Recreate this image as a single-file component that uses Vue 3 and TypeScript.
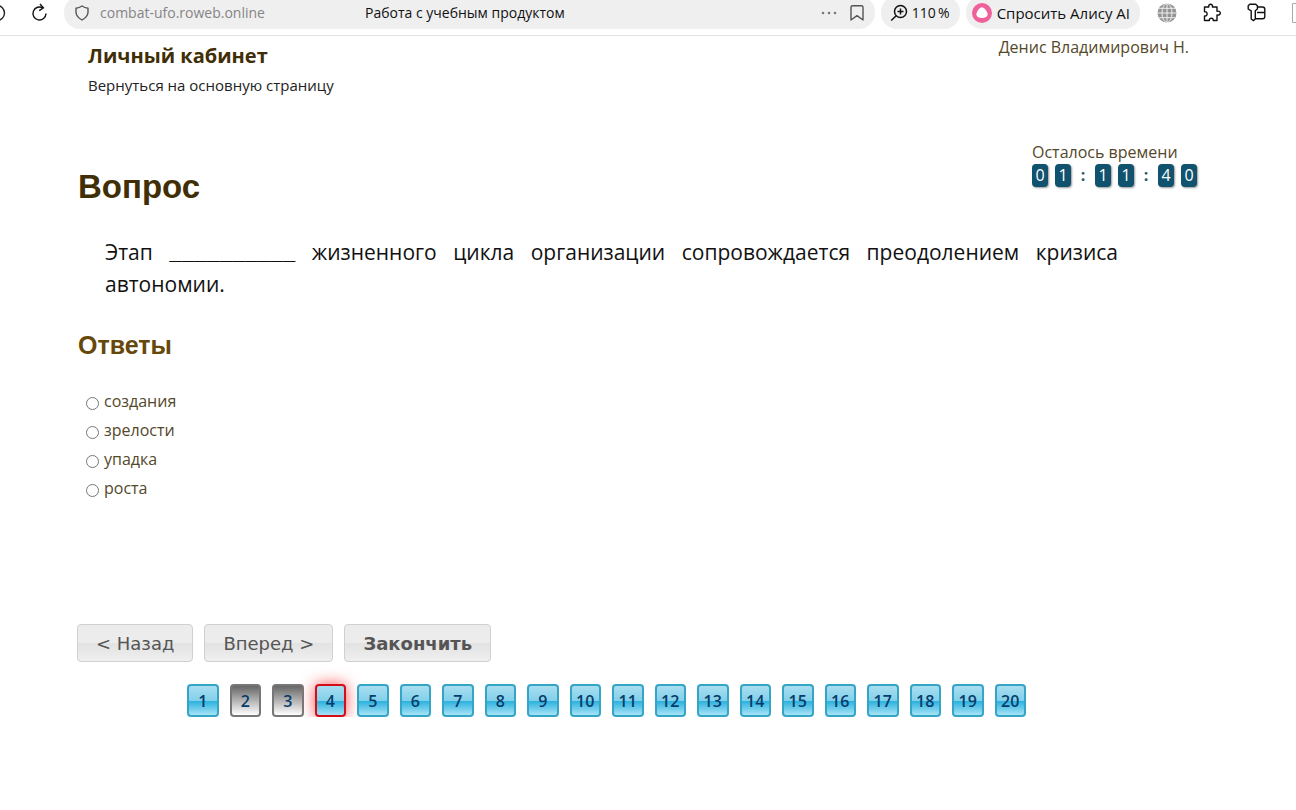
<script setup lang="ts">
import { ref } from 'vue'

type PageState = 'open' | 'answered' | 'current'

interface PageItem {
  number: number
  state: PageState
}

const answers: string[] = ['создания', 'зрелости', 'упадка', 'роста']
const selected = ref<string>('')
const timer: string[] = ['0', '1', ':', '1', '1', ':', '4', '0']

const stateOf = (n: number): PageState => {
  if (n === 4) return 'current'
  return n === 2 || n === 3 ? 'answered' : 'open'
}
const pages: PageItem[] = Array.from({ length: 20 }, (_, i) => ({
  number: i + 1,
  state: stateOf(i + 1),
}))
</script>

<template>
  <div class="window">
    <header class="toolbar">
      <button class="icon-button back" type="button" aria-label="Назад по истории">
        <svg width="6" height="20" viewBox="0 0 6 20" fill="none" stroke="#222" stroke-width="1.4">
          <circle cx="-3" cy="10" r="7.5" />
        </svg>
      </button>
      <button class="icon-button reload" type="button" aria-label="Обновить">
        <svg width="18" height="20" viewBox="0 0 18 20" fill="none" stroke="#111" stroke-width="1.4">
          <path d="M13 5 A6.5 6.5 0 1 0 16 10.6" />
          <path d="M10 1 L13.4 4.9 L9.2 7.6" />
        </svg>
      </button>
      <div class="address">
        <svg class="shield" width="16" height="18" viewBox="0 0 16 18" fill="none" stroke="#555" stroke-width="1.4" stroke-linejoin="round">
          <path d="M8 2 Q10.8 3.9 14 4.2 V8.5 Q13.6 13 8 16 Q2.4 13 2 8.5 V4.2 Q5.2 3.9 8 2Z" />
        </svg>
        <span class="host">combat-ufo.roweb.online</span>
        <span class="title">Работа с учебным продуктом</span>
        <button class="icon-button dots" type="button" aria-label="Ещё">
          <svg width="18" height="18" viewBox="0 0 18 18" fill="#777">
            <circle cx="3" cy="9" r="1.3" /><circle cx="9" cy="9" r="1.3" /><circle cx="15" cy="9" r="1.3" />
          </svg>
        </button>
        <button class="icon-button" type="button" aria-label="Закладка">
          <svg width="16" height="18" viewBox="0 0 16 18" fill="none" stroke="#555" stroke-width="1.4" stroke-linejoin="round">
            <path d="M2 3.2 Q2 1.7 3.5 1.7 H12.5 Q14 1.7 14 3.2 V16 L8 11.6 L2 16Z" />
          </svg>
        </button>
      </div>
      <button class="pill zoom" type="button">
        <svg width="18" height="18" viewBox="0 0 18 18" fill="none" stroke="#111" stroke-width="1.5">
          <circle cx="10.5" cy="7.5" r="6" /><path d="M6.2 11.8 L1.2 16.5 M7.5 7.5 H13.5 M10.5 4.5 V10.5" />
        </svg>
        <span>110&thinsp;%</span>
      </button>
      <button class="pill alice" type="button">
        <svg width="20" height="20" viewBox="0 0 20 20">
          <circle cx="10" cy="10" r="10" fill="#f0609a" />
          <path d="M10 4.2 C12.2 4.2 15.6 8.8 15.6 11.2 C15.6 14 12.5 15 10 15 C7.5 15 4.4 14 4.4 11.2 C4.4 8.8 7.8 4.2 10 4.2Z" fill="#fff" />
        </svg>
        <span>Спросить Алису AI</span>
      </button>
      <div class="extensions">
        <button class="icon-button" type="button" aria-label="Переводчик">
          <svg width="20" height="20" viewBox="0 0 20 20">
            <circle cx="10" cy="10" r="9.5" fill="#949494" />
            <g fill="none" stroke="#eee" stroke-width="1"><path d="M10 0 V20 M0 10 H20 M2 5.3 H18 M2 14.7 H18" /><ellipse cx="10" cy="10" rx="5" ry="9.5" /></g>
          </svg>
        </button>
        <button class="icon-button" type="button" aria-label="Расширения">
          <svg width="20" height="20" viewBox="0 0 20 20" fill="none" stroke="#111" stroke-width="1.4" stroke-linejoin="round">
            <path d="M2.5 4 H6.8 C5.8 .4 11.4 .4 10.4 4 H15 V8.2 C19.4 7.2 19.4 13 15 12 V17.5 H11.2 C11.8 14.4 6.8 14.4 7.4 17.5 H2.5 V13 C6 13.7 6 8 2.5 8.7Z" />
          </svg>
        </button>
        <button class="icon-button" type="button" aria-label="Пароли">
          <svg width="20" height="20" viewBox="0 0 20 20" fill="none" stroke="#111" stroke-width="1.4" stroke-linejoin="round">
            <path d="M2.8 1.2 H8.7 L10.4 2.8 V6 L8.3 7.8 V16 L6.4 17.6 L4.2 16 V7.8 L1.2 6 V2.8Z" />
            <path d="M10.4 4 H15.5 Q17.8 4 17.8 6.2 V13.6 Q17.8 15.8 15.5 15.8 H8.3 M10 9.5 H17.8" />
          </svg>
        </button>
        <svg class="edge" width="4" height="20" viewBox="0 0 4 20" fill="none" stroke="#aaa"><path d="M4 .5 H.5 V19.5 H4" /></svg>
      </div>
    </header>

    <main class="page">
      <div class="top">
        <div class="cabinet">
          <h2>Личный кабинет</h2>
          <a href="#">Вернуться на основную страницу</a>
        </div>
        <div class="user">Денис Владимирович Н.</div>
      </div>

      <div class="question-head">
        <h1>Вопрос</h1>
        <div class="countdown">
          <div class="countdown-label">Осталось времени</div>
          <div class="digits">
            <span v-for="(c, i) in timer" :key="i" :class="c === ':' ? 'colon' : 'digit'">{{ c }}</span>
          </div>
        </div>
      </div>

      <p class="question">
        Этап <span class="blank">__________</span> жизненного цикла организации сопровождается преодолением кризиса автономии.
      </p>

      <h3>Ответы</h3>
      <div class="answers" role="radiogroup" aria-label="Ответы">
        <label v-for="answer in answers" :key="answer">
          <input v-model="selected" type="radio" name="answer" :value="answer" />
          <span>{{ answer }}</span>
        </label>
      </div>

      <div class="actions">
        <button type="button">&lt; Назад</button>
        <button type="button">Вперед &gt;</button>
        <button type="button" class="finish">Закончить</button>
      </div>

      <nav class="pager" aria-label="Вопросы">
        <button v-for="p in pages" :key="p.number" type="button" :class="p.state">{{ p.number }}</button>
      </nav>
    </main>
  </div>
</template>

<style>
body {
  margin: 0;
  background: #fff;
}
</style>

<style scoped>
.window {
  font-family: "Open Sans", "Noto Sans", sans-serif;
  color: #3f2e06;
  overflow: hidden;
}
button {
  font-family: inherit;
  cursor: pointer;
}
svg {
  display: block;
  flex: none;
}
.toolbar {
  display: flex;
  align-items: flex-start;
  height: 35px;
  border-bottom: 1px solid #e2e2e4;
  font-size: 14px;
  color: #111;
}
.icon-button {
  border: 0;
  padding: 0;
  background: none;
}
.back {
  margin: 3px 24px 0 0;
}
.reload {
  margin: 3px 16px 0 0;
}
.address,
.pill {
  display: flex;
  align-items: center;
  box-sizing: border-box;
  height: 33px;
  margin-top: -4px;
  border: 0;
  border-radius: 16px;
  background: #efeff0;
  white-space: nowrap;
}
.address {
  flex: 1;
  padding: 0 10px;
}
.host {
  flex: none;
  width: 265px;
  margin-left: 10px;
  color: #858585;
}
.title {
  flex: 1;
}
.dots {
  margin-right: 11px;
}
.pill {
  margin-left: 6px;
  padding: 0 10px 0 9px;
  gap: 4px;
  font-size: 14px;
  color: #111;
}
.pill.alice {
  padding: 0 10px 0 6px;
  gap: 5px;
  font-size: 15px;
}
.extensions {
  display: flex;
  gap: 25px;
  margin: 3px 0 0 17px;
}
.page {
  padding: 0 78px;
}
.top {
  display: flex;
  justify-content: space-between;
  padding: 0 29px 0 10px;
}
h1,
h2,
h3 {
  margin: 0;
}
h2 {
  margin-top: 4px;
  font-size: 20px;
  line-height: 32px;
}
.cabinet a {
  display: block;
  font-size: 15px;
  line-height: 26px;
  color: #222;
  text-decoration: none;
}
.user {
  font-size: 16px;
  line-height: 22px;
  color: #54482a;
}
.question-head {
  display: flex;
  justify-content: space-between;
  margin-top: 43px;
}
h1 {
  margin-top: 26px;
  font-family: "Liberation Sans", Arial, sans-serif;
  font-size: 33px;
  line-height: 40px;
}
.countdown {
  width: 186px;
}
.countdown-label {
  font-size: 16px;
  line-height: 23px;
  color: #54482a;
}
.digits {
  display: flex;
  gap: 7px;
  align-items: center;
  font-size: 16px;
  line-height: 23px;
  text-align: center;
}
.digit {
  width: 16px;
  border-radius: 4px;
  background: #11526f;
  color: #fff;
  box-shadow: 1px 1px 2px #999;
}
.colon {
  width: 10px;
  font-weight: 700;
  color: #245a62;
}
.question {
  margin: 29px 100px 0 27px;
  font-size: 21px;
  line-height: 32px;
  color: #111;
  text-align: justify;
}
.blank {
  font-family: "Liberation Mono", monospace;
  line-height: 20px;
}
h3 {
  margin-top: 29px;
  font-family: "Liberation Sans", Arial, sans-serif;
  font-size: 25px;
  line-height: 32px;
  color: #66490a;
}
.answers {
  display: flex;
  flex-direction: column;
  align-items: flex-start;
  margin: 26px 0 0 8px;
}
.answers label {
  display: flex;
  align-items: center;
  gap: 5px;
  font-size: 16px;
  line-height: 29px;
  color: #54482a;
}
.answers input {
  width: 13px;
  height: 13px;
  margin: 4px 0 0;
}
.actions {
  display: flex;
  gap: 11px;
  margin: 121px 0 0 -1px;
}
.actions button {
  box-sizing: border-box;
  height: 38px;
  padding: 0 18px;
  border: 1px solid #d0d0d0;
  border-radius: 4px;
  background: linear-gradient(#ececec 50%, #e2e2e2 50%, #efefef);
  font-family: "DejaVu Sans", Verdana, sans-serif;
  font-size: 18px;
  color: #555;
}
.actions .finish {
  font-weight: 700;
}
.pager {
  display: grid;
  grid-template-columns: repeat(20, 1fr);
  gap: 11px;
  max-width: 839px;
  margin: 22px 0 0 109px;
}
.pager button {
  box-sizing: border-box;
  height: 33px;
  padding: 0;
  border: 2px solid #35a5c6;
  border-radius: 4px;
  background: linear-gradient(#a9def1, #82d0ea 50%, #2bb1de 52%, #a6e3f6);
  font-size: 16px;
  font-weight: 600;
  color: #073c6b;
}
.pager .answered {
  border-color: #777;
  background: linear-gradient(#666, #fff);
}
.pager .current {
  border-color: #d40d18;
  box-shadow: 0 0 15px #ff5050;
}
</style>
